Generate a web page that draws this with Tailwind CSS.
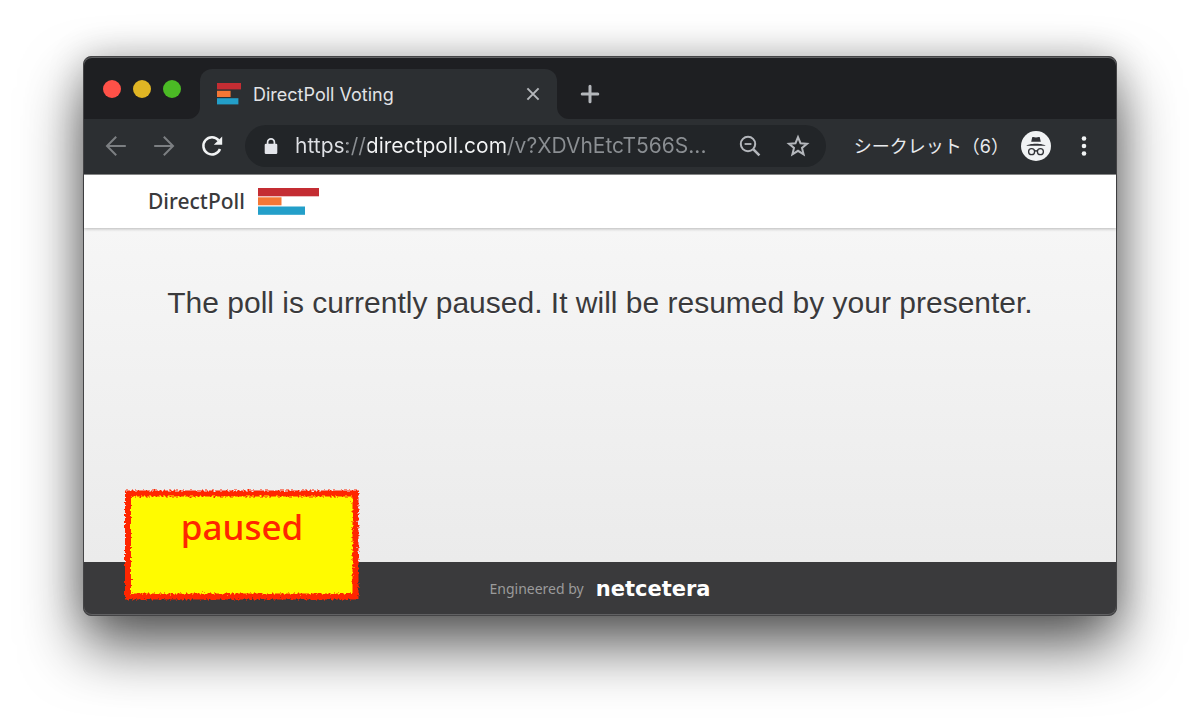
<!DOCTYPE html>
<html lang="en">

<head>
    <meta charset="UTF-8">
    <meta name="viewport" content="width=device-width, initial-scale=1.0">
    <title>DirectPoll Voting</title>
    <script src="https://cdn.jsdelivr.net/npm/@tailwindcss/browser@4"></script>
</head>

<body class="bg-white flex min-h-screen overflow-hidden px-[83px] pt-14 pb-[110px]">
    <!-- Browser window -->
    <div class="relative flex flex-1 flex-col rounded-lg border border-[#444446] bg-[#3a3a3c] shadow-[0_30px_60px_rgba(0,0,0,0.64),0_0_36px_rgba(0,0,0,0.2)]">

        <!-- Tab strip -->
        <div class="flex h-[62px] items-end rounded-t-lg bg-[#1e1f22] pl-[19px] font-['Inter',sans-serif]">
            <div class="mb-[21px] flex gap-3">
                <button aria-label="Close window" class="size-[18px] rounded-full bg-[#ff5148]"></button>
                <button aria-label="Minimize window" class="size-[18px] rounded-full bg-[#e0b524]"></button>
                <button aria-label="Zoom window" class="size-[18px] rounded-full bg-[#4bba25]"></button>
            </div>
            <div class="relative ml-[19px] flex h-[50px] w-[357px] items-center rounded-t-xl bg-[#2c2f32] pr-4 pl-[17px]">
                <!-- Flared bottom corners of the tab -->
                <svg class="absolute bottom-0 -left-3 size-3" viewBox="0 0 12 12" fill="#2c2f32"><path d="M12 0v12H0A12 12 0 0 0 12 0z"/></svg>
                <svg class="absolute -right-3 bottom-0 size-3" viewBox="0 0 12 12" fill="#2c2f32"><path d="M0 0v12h12A12 12 0 0 1 0 0z"/></svg>
                <svg class="h-[22px] w-6" viewBox="0 0 24 22">
                    <rect width="24" height="6.4" fill="#c42d33"/>
                    <rect y="7.8" width="13.6" height="6.2" fill="#f37735"/>
                    <rect y="15.2" width="21.4" height="6.2" fill="#239fc9"/>
                </svg>
                <span class="ml-3 flex-1 text-[18px] text-[#e1e3e6]">DirectPoll Voting</span>
                <button aria-label="Close tab">
                    <svg class="size-4" viewBox="0 0 16 16" stroke="#b4b7bb" stroke-width="2"><path d="M2.4 2.4l11.2 11.2M13.6 2.4L2.4 13.6"/></svg>
                </button>
            </div>
            <button aria-label="New tab" class="mb-[15px] ml-[23px]">
                <svg class="size-5" viewBox="0 0 20 20" stroke="#b4b7bb" stroke-width="3" stroke-linecap="round"><path d="M10 2.2v15.6M2.2 10h15.6"/></svg>
            </button>
        </div>

        <!-- Toolbar -->
        <div class="flex h-14 items-center border-b border-[#8a8b8c] bg-[#2c2f32] px-5 pb-px font-['Inter','Noto_Sans_CJK_JP',sans-serif]">
            <div class="flex gap-6">
                <button aria-label="Back">
                    <svg class="size-6" viewBox="0 0 24 24" fill="none" stroke="#7c7f82" stroke-width="2"><path d="M21.8 12H3.4M12.2 2.8L3 12l9.2 9.2"/></svg>
                </button>
                <button aria-label="Forward">
                    <svg class="size-6" viewBox="0 0 24 24" fill="none" stroke="#7c7f82" stroke-width="2"><path d="M2.2 12h18.4M11.8 2.8L21 12l-9.2 9.2"/></svg>
                </button>
                <button aria-label="Reload">
                    <svg class="size-6" viewBox="0 0 24 24" fill="none"><path d="M20 15A8.6 8.6 0 1 1 18.6 6.4" stroke="#f1f3f4" stroke-width="2.5"/><path d="M22.2 2.4v8.4h-8.4z" fill="#f1f3f4"/></svg>
                </button>
            </div>
            <div class="ml-[21px] flex h-[42px] min-w-0 flex-1 items-center rounded-full bg-[#222528] pr-4 pl-[19px]">
                <svg class="h-4 w-3.5 shrink-0" viewBox="0 0 14 16"><path d="M3.6 7V4.3a3.4 3.4 0 0 1 6.8 0V7" fill="none" stroke="#e3e5ea" stroke-width="1.7"/><rect x="0.7" y="5.8" width="12.6" height="10.2" rx="1.3" fill="#e3e5ea"/></svg>
                <input type="text" aria-label="Address" value="https://directpoll.com/v?XDVhEtcT566S..." class="ml-[17px] min-w-0 flex-1 bg-[linear-gradient(90deg,#dfe1e5_0_52px,#8b8f93_52px_73px,#f4f5f6_73px_213px,#8b8f93_213px)] bg-clip-text text-[21px] text-transparent outline-none">
                <button aria-label="Zoom out">
                    <svg class="size-6" viewBox="0 0 24 24" fill="none" stroke="#b4b7bc"><circle cx="10" cy="10" r="7.2" stroke-width="2"/><path d="M6.6 10h6.8" stroke-width="1.8"/><path d="M15.4 15.4l6 6" stroke-width="2.6"/></svg>
                </button>
                <button aria-label="Bookmark this page" class="ml-6">
                    <svg class="size-6" viewBox="0 0 24 24" fill="none" stroke="#b4b7bc" stroke-width="2"><path d="M12 3.2l2.5 6 6.500.500-5 4.200 1.600 6.400-5.600-3.500-5.600 3.500 1.600-6.400-5-4.200 6.500-.500z"/></svg>
                </button>
            </div>
            <span class="ml-7 text-[18px] whitespace-nowrap text-[#e8eaed]">シークレット（6）</span>
            <button aria-label="Incognito" class="ml-3">
                <svg class="size-[30px]" viewBox="0 0 30 30">
                    <circle cx="15" cy="15" r="15" fill="#f1f3f4"/>
                    <path d="M11.2 6.2c1.4-.5 2.4.3 3.8.3s2.4-.8 3.8-.3l1 4.5H10.2zM5.2 14.8c1-1 4.8-2 9.8-2s8.800 1 9.800 2z" fill="#303236"/>
                    <path d="M13.6 20.3c.8-.6 2-.6 2.8 0" fill="none" stroke="#303236" stroke-width="1.3"/>
                    <circle cx="10.6" cy="20.7" r="3" fill="none" stroke="#303236" stroke-width="1.3"/>
                    <circle cx="19.4" cy="20.7" r="3" fill="none" stroke="#303236" stroke-width="1.3"/>
                </svg>
            </button>
            <button aria-label="Menu" class="ml-[21px]">
                <svg class="size-6" viewBox="0 0 24 24" fill="#f1f3f4"><circle cx="12" cy="4.5" r="2.3"/><circle cx="12" cy="12" r="2.3"/><circle cx="12" cy="19.5" r="2.3"/></svg>
            </button>
        </div>

        <!-- Page -->
        <header class="z-10 flex h-[53px] items-center bg-white px-16 shadow-[0_1px_3px_rgba(0,0,0,0.25)]">
            <a href="#" class="flex items-center gap-[13px]">
                <span class="font-['Noto_Sans',sans-serif] text-[21px] font-medium text-[#3a3a3c]">DirectPoll</span>
                <svg class="h-[27px] w-[61px]" viewBox="0 0 61 27">
                    <rect width="61" height="8.3" fill="#c42d33"/>
                    <rect y="9.3" width="23.5" height="8" fill="#f37735"/>
                    <rect y="18.5" width="47" height="8.3" fill="#239fc9"/>
                </svg>
            </a>
        </header>

        <main class="flex-1 bg-linear-to-b from-[#f6f6f6] to-[#ebebeb] px-16 pt-[55px]">
            <p class="text-center font-['Liberation_Sans',sans-serif] text-[30px] leading-10 text-[#3a3a3c] [text-shadow:0_1px_0_#fff]">The poll is currently paused. It will be resumed by your presenter.</p>
        </main>

        <footer class="flex h-[53px] items-center justify-center gap-3 rounded-b-lg bg-[#3a3a3c]">
            <span class="font-['Noto_Sans',sans-serif] text-[14px] text-[#9b9b9b]">Engineered by</span>
            <a href="#" class="font-['DejaVu_Sans',sans-serif] text-[21px] leading-6 font-bold text-white">netcetera</a>
        </footer>

        <!-- Light line along the window's top and bottom edges -->
        <div class="pointer-events-none absolute inset-0 z-20 rounded-lg shadow-[inset_0_1px_0_rgba(255,255,255,0.3),inset_0_-1px_0_rgba(255,255,255,0.2)]"></div>

        <!-- Status note -->
        <div class="absolute bottom-3.5 left-10 z-30 h-[112px] w-[236px] pt-3 text-center">
            <svg class="absolute inset-0 size-full" viewBox="0 0 236 112">
                <filter id="rough" x="-5%" y="-5%" width="110%" height="110%">
                    <feTurbulence type="fractalNoise" baseFrequency="0.5" numOctaves="2" seed="4"/>
                    <feDisplacementMap in="SourceGraphic" scale="6" xChannelSelector="R" yChannelSelector="G"/>
                </filter>
                <rect x="4" y="4" width="228" height="104" fill="#fffb00"/>
                <rect x="4" y="4.5" width="227.5" height="103" fill="none" stroke="#ff2600" stroke-width="6" filter="url(#rough)"/>
            </svg>
            <span class="relative font-['Noto_Sans',sans-serif] text-[35px] font-medium text-[#ff2600]">paused</span>
        </div>
    </div>
</body>

</html>
